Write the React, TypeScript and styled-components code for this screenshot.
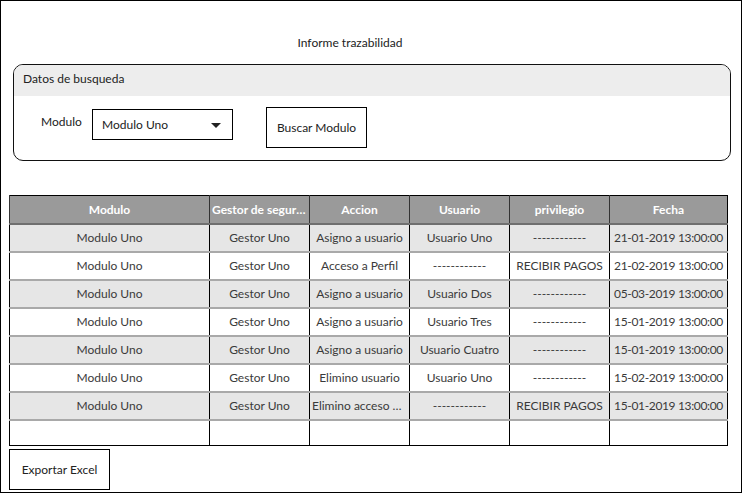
import React from "react";
import styled, { createGlobalStyle } from "styled-components";

const GlobalStyle = createGlobalStyle`
  html, body { margin: 0; padding: 0; background: #fff; }
  body { font-family: Lato, "Open Sans", sans-serif; color: #333; }
  * { box-sizing: border-box; }
`;

const Frame = styled.div`
  width: 742px;
  height: 493px;
  border: 1px solid #000;
  display: flex;
  flex-direction: column;
  font-size: 12px;
`;

const Title = styled.div`
  padding: 34px 42px 0 0;
  height: 63px;
  line-height: 16px;
  text-align: center;
  color: #222;
`;

const Panel = styled.section`
  margin: 0 10px 0 12px;
  height: 97px;
  border: 1px solid #111;
  border-radius: 10px;
  overflow: hidden;
`;

const PanelHeader = styled.div`
  height: 31px;
  background: #ededed;
  padding: 7px 0 0 9px;
  line-height: 14px;
  color: #222;
`;

const PanelBody = styled.div`
  display: flex;
  align-items: flex-start;
  padding-left: 27px;
`;

const Label = styled.span`
  margin-top: 19px;
  line-height: 14px;
  width: 51px;
  color: #222;
`;

const Select = styled.div`
  margin-top: 13px;
  width: 141px;
  height: 31px;
  border: 1px solid #000;
  display: flex;
  align-items: center;
  justify-content: space-between;
  padding: 0 11px 0 9px;
  color: #222;
`;

const Caret = styled.span`
  width: 0;
  height: 0;
  border-left: 5px solid transparent;
  border-right: 5px solid transparent;
  border-top: 5px solid #222;
  margin-top: 2px;
`;

const Button = styled.button<{ $top?: number }>`
  margin-top: ${(p) => p.$top ?? 0}px;
  width: 101px;
  height: 41px;
  border: 1px solid #000;
  background: #fff;
  font: inherit;
  font-size: 12px;
  color: #222;
  padding: 0;
`;

const SearchButton = styled(Button)`
  margin-left: 33px;
`;

const TableWrap = styled.div`
  margin: 34px 0 0 8px;
  width: 718px;
`;

const Table = styled.table`
  width: 718px;
  border-collapse: collapse;
  table-layout: fixed;
  border: 1px solid #000;
`;

const Th = styled.th`
  background: #9a9a9a;
  color: #fff;
  font-weight: 700;
  height: 28px;
  padding: 0 2px;
  border-left: 1px solid #333;
  border-bottom: 2px solid #6f6f6f;
  white-space: nowrap;
  overflow: hidden;
  text-overflow: ellipsis;
  font-size: 12px;
`;

const Tr = styled.tr<{ $shade: boolean }>`
  background: ${(p) => (p.$shade ? "#e6e6e6" : "#fff")};
`;

const Td = styled.td`
  height: 28px;
  padding: 0 2px;
  text-align: center;
  border-left: 1px solid #000;
  border-bottom: 2px solid #a9a9a9;
  white-space: nowrap;
  overflow: hidden;
  text-overflow: ellipsis;
  color: #3a3a3a;
`;

const DateTd = styled(Td)`
  padding: 0;
  letter-spacing: -0.35px;
`;

const EmptyTd = styled(Td)`
  height: 26px;
  border-bottom: none;
`;

const Footer = styled.div`
  margin: 3px 0 0 8px;
`;

const widths = [200, 100, 100, 100, 100, 118];
const headers = ["Modulo", "Gestor de seguridad", "Accion", "Usuario", "privilegio", "Fecha"];
const dash = "------------";
const rows = [
  ["Modulo Uno", "Gestor Uno", "Asigno a usuario", "Usuario Uno", dash, "21-01-2019 13:00:00"],
  ["Modulo Uno", "Gestor Uno", "Acceso a Perfil", dash, "RECIBIR PAGOS", "21-02-2019 13:00:00"],
  ["Modulo Uno", "Gestor Uno", "Asigno a usuario", "Usuario Dos", dash, "05-03-2019 13:00:00"],
  ["Modulo Uno", "Gestor Uno", "Asigno a usuario", "Usuario Tres", dash, "15-01-2019 13:00:00"],
  ["Modulo Uno", "Gestor Uno", "Asigno a usuario", "Usuario Cuatro", dash, "15-01-2019 13:00:00"],
  ["Modulo Uno", "Gestor Uno", "Elimino usuario", "Usuario Uno", dash, "15-02-2019 13:00:00"],
  ["Modulo Uno", "Gestor Uno", "Elimino acceso a perfil", dash, "RECIBIR PAGOS", "15-01-2019 13:00:00"],
];

export default function App() {
  return (
    <>
      <GlobalStyle />
      <Frame>
        <Title>Informe trazabilidad</Title>
        <Panel>
          <PanelHeader>Datos de busqueda</PanelHeader>
          <PanelBody>
            <Label>Modulo</Label>
            <Select>
              <span>Modulo Uno</span>
              <Caret />
            </Select>
            <SearchButton $top={11}>Buscar Modulo</SearchButton>
          </PanelBody>
        </Panel>
        <TableWrap>
          <Table>
            <colgroup>
              {widths.map((w, i) => (
                <col key={i} style={{ width: w }} />
              ))}
            </colgroup>
            <thead>
              <tr>
                {headers.map((h) => (
                  <Th key={h}>{h}</Th>
                ))}
              </tr>
            </thead>
            <tbody>
              {rows.map((r, i) => (
                <Tr key={i} $shade={i % 2 === 0}>
                  {r.map((c, j) =>
                    j === 5 ? <DateTd key={j}>{c}</DateTd> : <Td key={j}>{c}</Td>
                  )}
                </Tr>
              ))}
              <Tr $shade={false}>
                {widths.map((_, j) => (
                  <EmptyTd key={j} />
                ))}
              </Tr>
            </tbody>
          </Table>
        </TableWrap>
        <Footer>
          <Button>Exportar Excel</Button>
        </Footer>
      </Frame>
    </>
  );
}
